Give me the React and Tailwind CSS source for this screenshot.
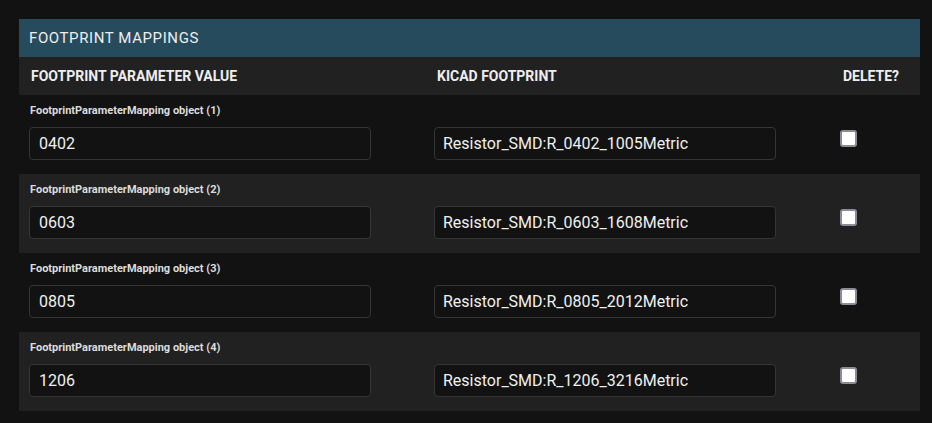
const mappings = [
  { id: 1, value: "0402", footprint: "Resistor_SMD:R_0402_1005Metric" },
  { id: 2, value: "0603", footprint: "Resistor_SMD:R_0603_1608Metric" },
  { id: 3, value: "0805", footprint: "Resistor_SMD:R_0805_2012Metric" },
  { id: 4, value: "1206", footprint: "Resistor_SMD:R_1206_3216Metric" },
];

const Row = ({ item, alt }) => (
  <div className={`flex flex-col pt-[9px] pb-[14px] ${alt ? "bg-[#212121]" : "bg-[#121212]"}`}>
    <p className="pl-[11px] text-[11px] leading-[14px] font-bold text-[#dcdcdc] mb-[9px]">
      FootprintParameterMapping object ({item.id})
    </p>
    <div className="grid grid-cols-[405px_405px_1fr] items-start">
      <div className="pl-[10px]">
        <input
          type="text"
          defaultValue={item.value}
          className="w-[342px] h-[33px] px-[9px] rounded-[4px] border border-[#353535] bg-[#121212] text-[16px] text-[#f0f0f0] outline-none"
        />
      </div>
      <div className="pl-[10px]">
        <input
          type="text"
          defaultValue={item.footprint}
          className="w-[342px] h-[33px] px-[8px] rounded-[4px] border border-[#353535] bg-[#121212] text-[16px] text-[#f0f0f0] outline-none"
        />
      </div>
      <div className="pl-[11px] pt-[3px]">
        <div className="w-[17px] h-[17px] rounded-[3px] bg-[#8c8c99] p-[2px]">
          <div className="w-full h-full bg-white rounded-[1px]" />
        </div>
      </div>
    </div>
  </div>
);

export default function App() {
  return (
    <div className="min-h-screen bg-[#121212] pl-[19px] pt-[19px]" style={{ fontFamily: "Roboto, 'Noto Sans', sans-serif" }}>
      <div className="w-[901px]">
        <div className="h-[38px] bg-[#264b5d] flex items-center pl-[10px]">
          <h2 className="text-[15px] tracking-[0.6px] text-[#eeeeee] font-normal">FOOTPRINT MAPPINGS</h2>
        </div>
        <div className="h-[38px] bg-[#212121] grid grid-cols-[405px_405px_1fr] items-center text-[14px] font-bold text-[#eeeeee]">
          <div className="pl-[12px]">FOOTPRINT PARAMETER VALUE</div>
          <div className="pl-[13px]">KICAD FOOTPRINT</div>
          <div className="pl-[14px]">DELETE?</div>
        </div>
        {mappings.map((m, i) => (
          <Row key={m.id} item={m} alt={i % 2 === 1} />
        ))}
      </div>
    </div>
  );
}
